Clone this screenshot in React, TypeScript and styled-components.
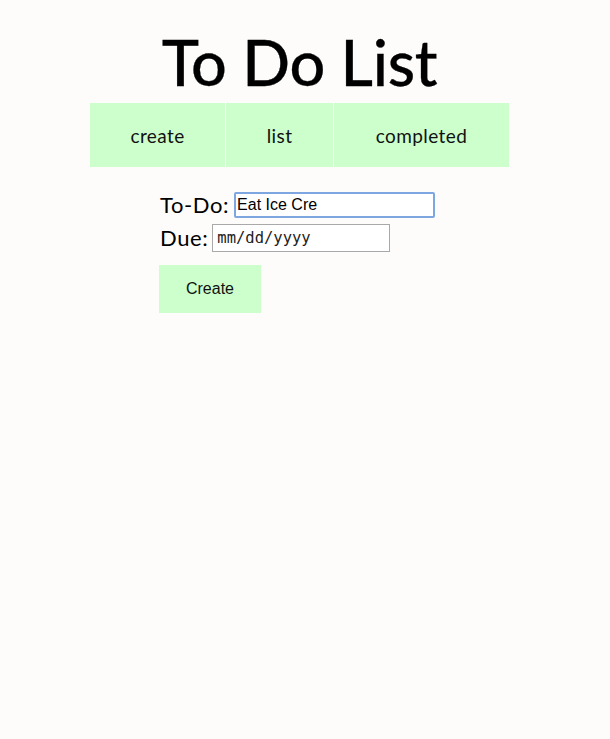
import styled, { createGlobalStyle } from 'styled-components';

const GlobalStyle = createGlobalStyle`
  html, body {
    margin: 0;
    padding: 0;
    background: #fdfcfa;
  }
  body {
    font-family: "Nunito", Lato, "Noto Sans", sans-serif;
    color: #000;
  }
`;

const Page = styled.div`
  width: 599px;
  display: flex;
  flex-direction: column;
  align-items: center;
  padding-top: 29px;
`;

const Title = styled.h1`
  margin: 0 0 8px;
  font-size: 63px;
  font-weight: 500;
  line-height: 66px;
  letter-spacing: -0.3px;
  font-family: Lato, "Noto Sans", sans-serif;
  -webkit-text-stroke: 0.3px #000;
`;

const Nav = styled.nav`
  display: flex;
  gap: 1px;
`;

const Tab = styled.a<{ $width: number }>`
  width: ${(p) => p.$width}px;
  height: 64px;
  display: flex;
  align-items: center;
  justify-content: center;
  background: #ccffcc;
  font-size: 19px;
  letter-spacing: 0.4px;
  font-family: Lato, "Noto Sans", sans-serif;
  color: #111;
  text-decoration: none;
  cursor: pointer;
`;

const Form = styled.form`
  width: 281px;
  margin-top: 25px;
  display: flex;
  flex-direction: column;
  align-items: flex-start;
`;

const Row = styled.div<{ $gap: number }>`
  display: flex;
  align-items: center;
  gap: ${(p) => p.$gap}px;
  margin-bottom: 6px;
`;

const Label = styled.label`
  font-size: 22px;
  line-height: 26px;
  letter-spacing: 0.6px;
  font-family: Lato, "Noto Sans", sans-serif;
  padding-left: 1px;
`;

const TextInput = styled.input`
  width: 201px;
  height: 26px;
  box-sizing: border-box;
  font-family: "Liberation Sans", Arial, sans-serif;
  font-size: 16px;
  padding: 1px 1px;
  border: 2px solid #7ea6e0;
  border-radius: 2px;
  outline: none;
  background: #fff;
  color: #000;
`;

const DateInput = styled.input`
  width: 178px;
  height: 28px;
  box-sizing: border-box;
  font-family: "DejaVu Sans Mono", monospace;
  font-size: 15.5px;
  padding: 1px 4px;
  border: 1px solid #a9a9a9;
  background: #fff;

  &::placeholder {
    color: #222;
  }
`;

const Button = styled.button`
  margin-top: 7px;
  width: 102px;
  height: 48px;
  border: none;
  background: #ccffcc;
  font-family: "Liberation Sans", Arial, sans-serif;
  font-size: 16px;
  color: #111;
  cursor: pointer;
`;

const App = () => {
  return (
    <>
      <GlobalStyle />
      <Page>
        <Title>To Do List</Title>
        <Nav>
          <Tab $width={135}>create</Tab>
          <Tab $width={107}>list</Tab>
          <Tab $width={175}>completed</Tab>
        </Nav>
        <Form onSubmit={(e) => e.preventDefault()}>
          <Row $gap={5}>
            <Label htmlFor="todo">To-Do:</Label>
            <TextInput id="todo" type="text" defaultValue="Eat Ice Cre" />
          </Row>
          <Row $gap={4}>
            <Label htmlFor="due">Due:</Label>
            <DateInput id="due" type="text" placeholder="mm/dd/yyyy" />
          </Row>
          <Button type="submit">Create</Button>
        </Form>
      </Page>
    </>
  );
};

export default App;
